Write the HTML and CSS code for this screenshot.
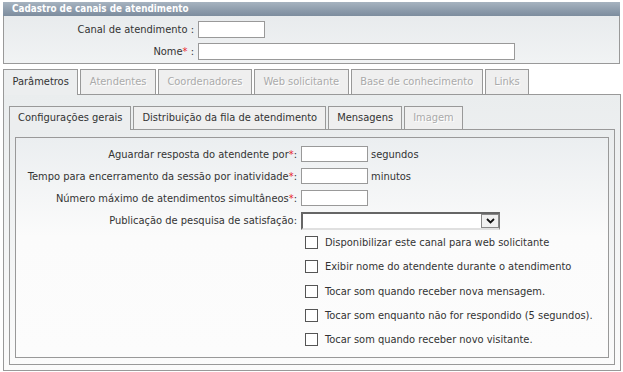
FILE: index.html
```html
<!DOCTYPE html>
<html lang="pt">
<head>
<meta charset="utf-8">
<title>Cadastro de canais de atendimento</title>
<link rel="stylesheet" href="styles.css">
</head>
<body>
<div class="box">
  <div class="box-title">Cadastro de canais de atendimento</div>
  <div class="box-body">
    <div class="frow">
      <label class="flabel">Canal de atendimento :</label>
      <input class="txt txt-short" type="text">
    </div>
    <div class="frow">
      <label class="flabel">Nome<span class="req">*</span> :</label>
      <input class="txt txt-long" type="text">
    </div>
  </div>
</div>

<div class="tabs main-tabs">
  <div class="tab active">Parâmetros</div>
  <div class="tab off">Atendentes</div>
  <div class="tab off">Coordenadores</div>
  <div class="tab off">Web solicitante</div>
  <div class="tab off">Base de conhecimento</div>
  <div class="tab off">Links</div>
</div>
<div class="panel">
  <div class="tabs sub-tabs">
    <div class="tab active">Configurações gerais</div>
    <div class="tab">Distribuição da fila de atendimento</div>
    <div class="tab">Mensagens</div>
    <div class="tab off">Imagem</div>
  </div>
  <div class="subpanel">
    <div class="inner">
      <div class="irow">
        <label class="ilabel">Aguardar resposta do atendente por<span class="req">*</span>:</label>
        <input class="txt txt-num" type="text">
        <span class="unit">segundos</span>
      </div>
      <div class="irow">
        <label class="ilabel">Tempo para encerramento da sessão por inatividade<span class="req">*</span>:</label>
        <input class="txt txt-num" type="text">
        <span class="unit">minutos</span>
      </div>
      <div class="irow">
        <label class="ilabel">Número máximo de atendimentos simultâneos<span class="req">*</span>:</label>
        <input class="txt txt-num" type="text">
      </div>
      <div class="irow">
        <label class="ilabel">Publicação de pesquisa de satisfação:</label>
        <div class="combo">
          <div class="combo-field"></div>
          <div class="combo-btn">
            <svg width="9" height="6" viewBox="0 0 9 6"><path d="M1 1 L4.5 4.5 L8 1" fill="none" stroke="#111" stroke-width="1.8"/></svg>
          </div>
        </div>
      </div>
      <div class="checks">
        <label class="crow"><span class="cb"></span>Disponibilizar este canal para web solicitante</label>
        <label class="crow"><span class="cb"></span>Exibir nome do atendente durante o atendimento</label>
        <label class="crow"><span class="cb"></span>Tocar som quando receber nova mensagem.</label>
        <label class="crow"><span class="cb"></span>Tocar som enquanto não for respondido (5 segundos).</label>
        <label class="crow"><span class="cb"></span>Tocar som quando receber novo visitante.</label>
      </div>
    </div>
  </div>
</div>
</body>
</html>
```
FILE: styles.css
```css
* { box-sizing: border-box; }
html, body { margin: 0; padding: 0; background: #fff; }
body {
  font-family: "DejaVu Sans Condensed", "DejaVu Sans", sans-serif;
  font-size: 11px;
  color: #333;
  padding: 2px 3px 0 3px;
  width: 623px;
}
.req { color: #e8242a; }

.box { width: 617px; border: 1px solid #999; border-top: none; }
.box-title {
  height: 14px;
  margin: 0 -1px;
  padding-left: 9px;
  line-height: 14px;
  font-size: 9.8px;
  font-weight: bold;
  color: #fff;
  background: linear-gradient(#a6b3c0, #8c9bab 60%, #7d8d9e);
}
.box-body {
  background: linear-gradient(#e8ebed, #f1f3f4);
  padding: 5px 0 3px 0;
  height: 47px;
}
.frow { display: flex; align-items: center; height: 17px; margin-bottom: 5px; }
.flabel { width: 194px; text-align: right; padding-right: 4px; }
.txt {
  border: 1px solid #999;
  background: #fff;
  height: 17px;
  padding: 0 2px;
  margin: 0;
  font: inherit;
}
.txt-short { width: 67px; }
.txt-long { width: 317px; }

.tabs { display: flex; gap: 2px; margin-top: 5px; height: 25px; }
.tab {
  border: 1px solid #999;
  border-bottom: none;
  background: #efefef;
  padding: 0 8.5px;
  line-height: 24px;
  height: 25px;
  color: #333;
  white-space: nowrap;
}
.tab.off { color: #aaa; text-shadow: 1px 1px 0 #fff; }
.tab.active { background: #eceeef; position: relative; height: 26px; z-index: 1; }

.panel {
  width: 618px;
  height: 277px;
  border: 1px solid #999;
  background: linear-gradient(#eaedee, #fbfbfb);
  padding: 11px 5px 5px 5px;
}
.sub-tabs { margin-top: 0; height: 23px; }
.sub-tabs .tab { height: 23px; line-height: 22px; padding: 0 8px; }
.sub-tabs .tab.active { height: 24px; background: #eceeef; }

.subpanel {
  height: 236px;
  border: 1px solid #999;
  background: linear-gradient(#eaedee, #fbfbfb);
  padding: 7px 5px 6px 5px;
}
.inner {
  height: 221px;
  border: 1px solid #999;
  background: linear-gradient(#ebeef0, #fbfbfb 45%, #fcfcfc);
  padding-top: 8px;
}
.irow { display: flex; align-items: center; height: 16px; margin-bottom: 6px; }
.ilabel { width: 285px; text-align: right; padding-right: 4px; white-space: nowrap; }
.txt-num { width: 67px; height: 16px; }
.unit { margin-left: 3px; }

.combo {
  display: flex;
  width: 199px;
  height: 18px;
  border-style: solid;
  border-width: 2px 1px 2px 2px;
  border-color: #666 #777 #e0e0e0 #666;
  background: #fff;
  margin-top: 2px;
}
.combo-field { flex: 1; }
.combo-btn {
  width: 18px;
  border: 1px solid #888;
  background: #f0f0f0;
  display: flex;
  align-items: center;
  justify-content: center;
}

.checks { padding-left: 289px; padding-top: 2px; }
.crow { display: flex; align-items: center; height: 13px; margin-bottom: 11.3px; }
.cb {
  width: 13px; height: 13px;
  border: 1px solid #555;
  background: #fff;
  margin-right: 7px;
  flex: none;
}
```
